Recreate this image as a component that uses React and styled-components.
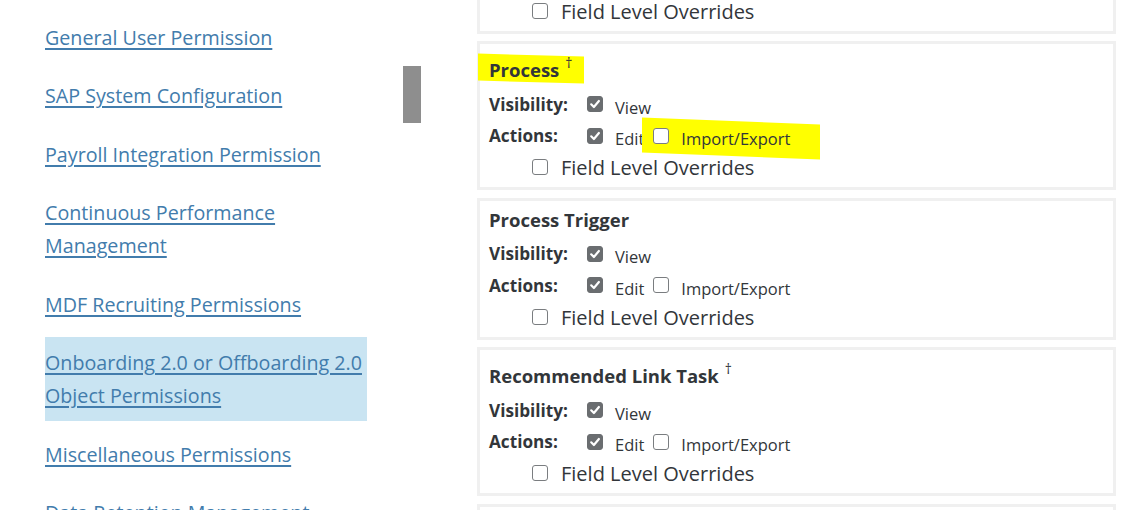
import React from "react";
import styled, { createGlobalStyle, css } from "styled-components";

const Global = createGlobalStyle`
  html, body { margin: 0; padding: 0; background: #ffffff; }
  body { font-family: "Open Sans", "Liberation Sans", sans-serif; overflow: hidden; }
  #root { height: 510px; }
`;

const Page = styled.div`
  display: flex;
  height: 510px;
  overflow: hidden;
`;

const Sidebar = styled.div`
  display: flex;
  padding-left: 45px;
  gap: 36px;
  flex: none;
`;

const Nav = styled.nav`
  width: 322px;
  display: flex;
  flex-direction: column;
  gap: 7.5px;
  padding-top: 11.5px;
`;

const NavItem = styled.div`
  padding: 9px 0;
  line-height: 33px;
  font-size: 19.7px;
  background: ${(p) => (p.$active ? "#c9e4f2" : "transparent")};
`;

const NavLink = styled.a`
  color: #427cac;
  text-decoration: underline;
  text-underline-offset: 3px;
  text-decoration-thickness: 2px;
  cursor: pointer;
`;

const Track = styled.div`
  width: 18px;
  padding-top: 66px;
`;

const Thumb = styled.div`
  height: 57px;
  background: #8e8e8e;
`;

const Main = styled.main`
  flex: 1;
  margin-left: 56px;
  padding-right: 13px;
  display: flex;
  flex-direction: column;
  gap: 7.5px;
  color: #32363a;
`;

const Card = styled.section`
  border: 3px solid #f0f0f0;
  padding: 7px 9px 4px;
  margin-top: ${(p) => p.$offset || 0}px;
`;

const Header = styled.h3`
  margin: 0 0 6.5px;
  font-size: 18.5px;
  font-weight: 700;
  line-height: 24px;
  padding-top: ${(p) => (p.$note ? 7 : 0)}px;
`;

const Mark = styled.span`
  position: relative;
  z-index: 0;
  ${(p) =>
    p.$on &&
    css`
      &::before {
        content: "";
        position: absolute;
        z-index: -1;
        left: ${p.$l}px;
        right: ${p.$r}px;
        top: ${p.$t}px;
        bottom: ${p.$b}px;
        background: #ffff00;
        transform: skewY(${p.$skew}deg);
      }
    `}
`;

const Dagger = styled.sup`
  font-size: 14px;
  font-weight: 400;
  line-height: 0;
  position: relative;
  top: -2px;
  margin-left: 6px;
  vertical-align: super;
`;

const Row = styled.div`
  display: flex;
  align-items: center;
  height: 31.5px;
  padding-left: ${(p) => p.$indent || 0}px;
`;

const RowLabel = styled.span`
  width: 98px;
  flex: none;
  font-size: 17.2px;
  font-weight: 700;
`;

const Option = styled.label`
  display: inline-flex;
  align-items: center;
  gap: ${(p) => (p.$big ? 13 : 12)}px;
  margin-right: 9px;
  font-size: ${(p) => (p.$big ? 20 : 16.5)}px;
`;

const OptionText = styled.span`
  padding-top: ${(p) => (p.$big ? 1 : 6)}px;
`;

const Box = styled.span`
  width: 16px;
  height: 16px;
  box-sizing: border-box;
  border-radius: 3px;
  flex: none;
  display: inline-flex;
  align-items: center;
  justify-content: center;
  background: ${(p) => (p.$checked ? "#6a6d70" : "#ffffff")};
  border: 1px solid ${(p) => (p.$checked ? "#6a6d70" : "#7a7d80")};
`;

function Check({ checked }) {
  return (
    <Box $checked={checked}>
      {checked && (
        <svg width="12" height="12" viewBox="0 0 12 12">
          <path d="M2.2 6.3 L4.9 9 L9.9 3" fill="none" stroke="#fff" strokeWidth="2.2" strokeLinecap="round" strokeLinejoin="round" />
        </svg>
      )}
    </Box>
  );
}

const navItems = [
  "General User Permission",
  "SAP System Configuration",
  "Payroll Integration Permission",
  "Continuous Performance Management",
  "MDF Recruiting Permissions",
  "Onboarding 2.0 or Offboarding 2.0 Object Permissions",
  "Miscellaneous Permissions",
  "Data Retention Management",
];

const cards = [
  { title: "Position Type", offset: -108.5 },
  { title: "Process", note: true, highlight: true },
  { title: "Process Trigger" },
  { title: "Recommended Link Task", note: true },
  { title: "Recurring Item" },
];

function PermCard({ title, note, highlight, offset }) {
  return (
    <Card $offset={offset}>
      <Header $note={note}>
        <Mark $on={highlight} $l={-11} $r={-12} $t={-2} $b={0} $skew={1.5}>
          {title}
          {note && <Dagger>†</Dagger>}
        </Mark>
      </Header>
      <Row>
        <RowLabel>Visibility:</RowLabel>
        <Option>
          <Check checked />
          <OptionText>View</OptionText>
        </Option>
      </Row>
      <Row>
        <RowLabel>Actions:</RowLabel>
        <Option>
          <Check checked />
          <OptionText>Edit</OptionText>
        </Option>
        <Mark $on={highlight} $l={-11} $r={-21} $t={0} $b={-6} $skew={2.2}>
          <Option>
            <Check />
            <OptionText>Import/Export</OptionText>
          </Option>
        </Mark>
      </Row>
      <Row $indent={43}>
        <Option $big>
          <Check />
          <OptionText $big>Field Level Overrides</OptionText>
        </Option>
      </Row>
    </Card>
  );
}

export default function App() {
  return (
    <>
      <Global />
      <Page>
        <Sidebar>
          <Nav>
            {navItems.map((t) => (
              <NavItem key={t} $active={t.startsWith("Onboarding")}>
                <NavLink>{t}</NavLink>
              </NavItem>
            ))}
          </Nav>
          <Track>
            <Thumb />
          </Track>
        </Sidebar>
        <Main>
          {cards.map((c) => (
            <PermCard key={c.title} {...c} />
          ))}
        </Main>
      </Page>
    </>
  );
}
